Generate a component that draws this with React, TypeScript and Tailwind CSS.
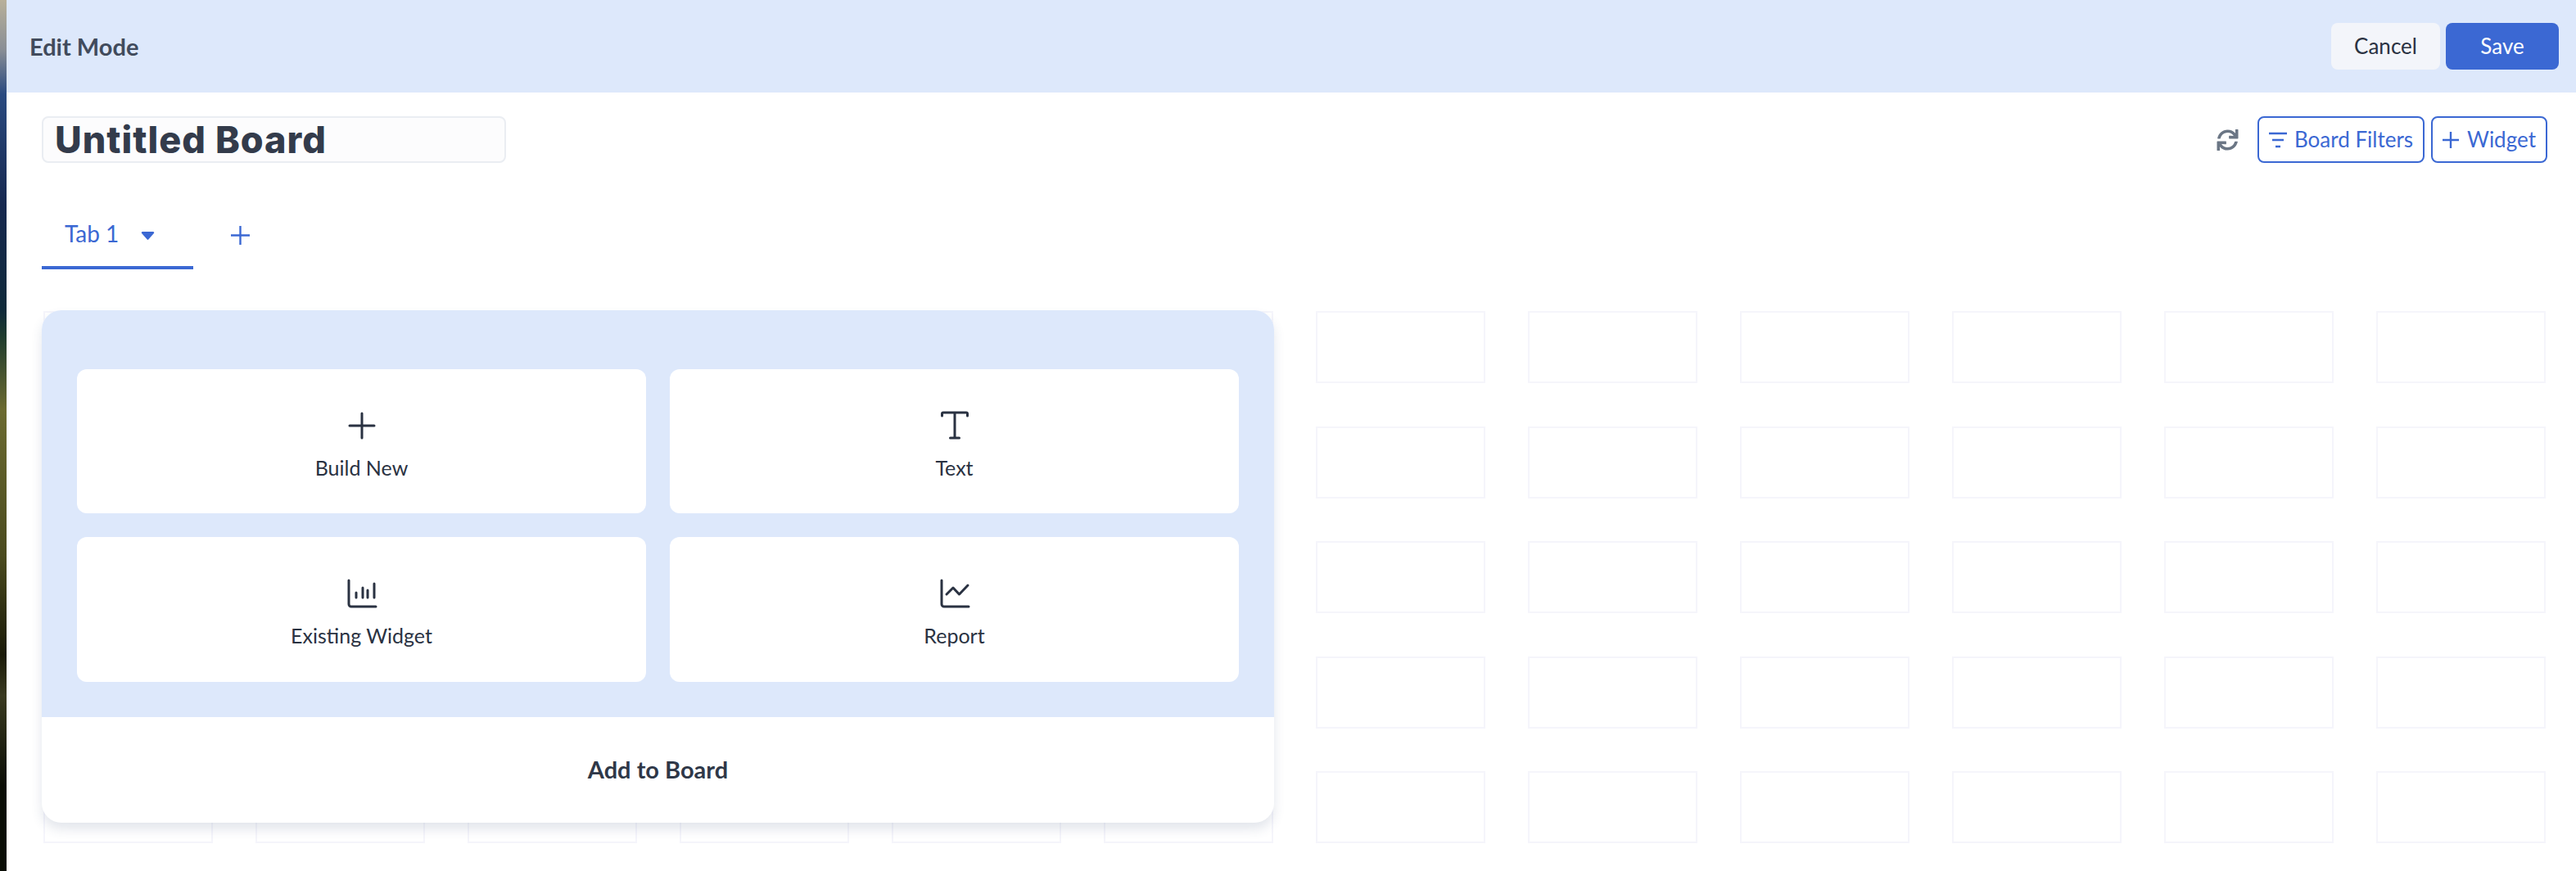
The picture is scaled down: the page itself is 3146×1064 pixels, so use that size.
import React from "react";
import { FaSync } from "react-icons/fa";

const cells = Array.from({ length: 60 }, (_, i) => i);

function Card({ label, children }: { label: string; children: React.ReactNode }) {
  return (
    <div className="flex flex-col items-center rounded-[12px] bg-white pt-[49px]">
      <svg viewBox="0 0 40 40" className="h-10 w-10 text-[#2a3242]" fill="none" stroke="currentColor" strokeWidth="3" strokeLinecap="round" strokeLinejoin="round">
        {children}
      </svg>
      <span className="mt-[14px] text-[25px] leading-[34px] text-[#2a3242]">{label}</span>
    </div>
  );
}

export default function App() {
  return (
    <div className="flex h-[1064px] w-[3146px] overflow-hidden bg-white font-['Lato',sans-serif]">
      <div className="w-2 shrink-0 bg-[linear-gradient(180deg,#b8b09a_0px,#8a8f95_60px,#2a4a80_115px,#16284f_250px,#0f2a3a_380px,#1e3b2e_410px,#6b6a30_500px,#4a4a1e_680px,#1a1a08_800px,#3a3a20_850px,#0a0d05_960px)]" />
      <div className="flex min-w-0 flex-1 flex-col">
        <header className="flex h-[113px] shrink-0 items-center justify-between bg-[#dde8fb] pl-[28px] pr-[21px]">
          <span className="text-[29px] font-bold leading-none text-[#414b5c]">Edit Mode</span>
          <div className="flex gap-[7px]">
            <button className="h-[57px] w-[133px] rounded-[8px] bg-[#f3f5fa] text-[26px] text-[#2a3242]">Cancel</button>
            <button className="h-[57px] w-[138px] rounded-[8px] bg-[#3b68d3] text-[26px] text-white">Save</button>
          </div>
        </header>

        <div className="flex flex-1 flex-col pl-[43px] pr-[35px] pt-[29px]">
          <div className="flex h-[57px] shrink-0 items-center justify-between">
            <div className="flex h-[57px] w-[567px] items-center rounded-[8px] border-2 border-[#eaedf2] bg-[#fcfcfd] pl-[14px]">
              <span className="font-['Inter',sans-serif] text-[45px] font-extrabold leading-none tracking-[1px] text-[#333b4b]">Untitled Board</span>
            </div>
            <div className="flex items-center">
              <FaSync className="mr-[23px] h-[26px] w-[27px] text-[#6b7685]" />
              <button className="flex h-[57px] w-[204px] items-center justify-center gap-[9px] rounded-[8px] border-2 border-[#3b68d3] text-[26px] text-[#3b68d3]">
                <svg viewBox="0 0 22 20" className="h-5 w-[22px]" fill="none" stroke="currentColor" strokeWidth="2.4">
                  <path d="M0 2h22M4 10h14M8 18h6" />
                </svg>
                Board Filters
              </button>
              <button className="ml-[8px] flex h-[57px] w-[142px] items-center justify-center gap-[10px] rounded-[8px] border-2 border-[#3b68d3] text-[26px] text-[#3b68d3]">
                <svg viewBox="0 0 20 20" className="h-5 w-5" fill="none" stroke="currentColor" strokeWidth="2.4">
                  <path d="M0 10h20M10 0v20" />
                </svg>
                Widget
              </button>
            </div>
          </div>

          <div className="mt-[52px] flex h-[78px] shrink-0 items-start">
            <div className="flex h-[78px] w-[185px] items-start border-b-4 border-[#3b68d3] pl-[28px] pt-[17px] text-[#3b68d3]">
              <span className="text-[28px] leading-[34px]">Tab 1</span>
              <svg viewBox="0 0 16 10" className="ml-[27px] mt-[15px] h-[10px] w-[17px]" fill="currentColor">
                <path d="M1.5 0h13a1.2 1.2 0 0 1 .9 2L9 9.3a1.3 1.3 0 0 1-2 0L.6 2a1.2 1.2 0 0 1 .9-2z" />
              </svg>
            </div>
            <svg viewBox="0 0 23 23" className="ml-[46px] mt-[25px] h-[23px] w-[23px] text-[#3b68d3]" fill="none" stroke="currentColor" strokeWidth="2.4">
              <path d="M0 11.5h23M11.5 0v23" />
            </svg>
          </div>

          <div className="relative ml-[2px] mr-[2px] mt-[51px]">
            <div className="grid grid-cols-12 gap-x-[52px] gap-y-[52.5px]">
              {cells.map((c) => (
                <div key={c} className="h-[88px] border-2 border-[#f5f5fb]" />
              ))}
            </div>

            <div className="absolute left-[-2px] top-[-1px] flex h-[626px] w-[1505px] flex-col overflow-hidden rounded-[24px] bg-white shadow-[0_8px_14px_rgba(60,75,120,0.14)]">
              <div className="grid h-[497px] shrink-0 grid-cols-2 grid-rows-[176px_177px] gap-x-[29px] gap-y-[29px] bg-[#dde8fb] px-[43px] pt-[72px]">
                <Card label="Build New">
                  <path d="M5 20h30M20 5v30" />
                </Card>
                <Card label="Text">
                  <path d="M4.5 8V5.5a1.5 1.5 0 0 1 1.5-1.5h28a1.5 1.5 0 0 1 1.5 1.5V8M20 4v31M14.5 35h11" />
                </Card>
                <Card label="Existing Widget">
                  <path d="M4 4v29a3 3 0 0 0 3 3h30" />
                  <path d="M13 19v6M21 13v12M27 16v9M35 8v17" />
                </Card>
                <Card label="Report">
                  <path d="M4 4v29a3 3 0 0 0 3 3h30" />
                  <path d="M10 21l8-8 7.5 8L36 10" />
                </Card>
              </div>
              <div className="flex flex-1 items-center justify-center pb-[2px] text-[29px] font-bold text-[#2f3848]">Add to Board</div>
            </div>
          </div>
        </div>
      </div>
    </div>
  );
}
